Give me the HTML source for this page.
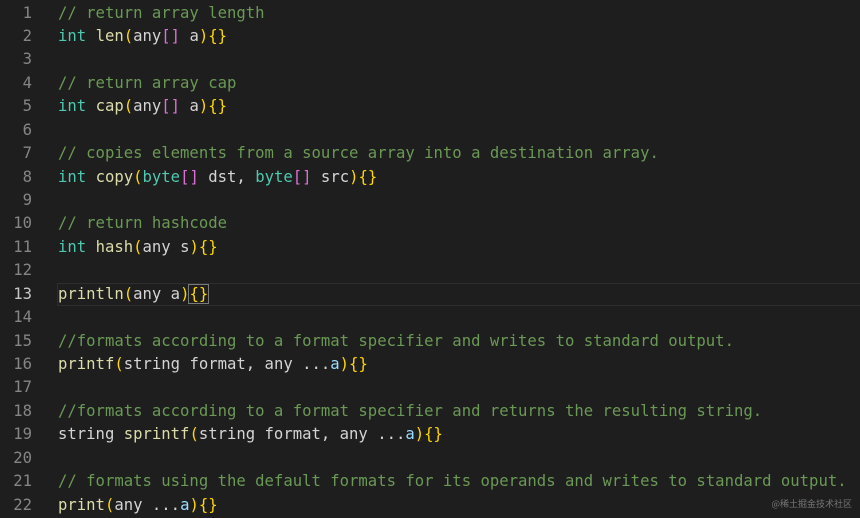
<!DOCTYPE html>
<html><head><style>
body{margin:0;background:#1e1e1e;width:860px;height:518px;overflow:hidden;font-family:"DejaVu Sans Mono","Liberation Mono",monospace;font-size:15.6px;}
.l{position:absolute;left:0;height:23.43px;line-height:23.43px;white-space:pre;width:860px;}
.n{position:absolute;left:0;width:32px;text-align:right;color:#858585;}
.c{position:absolute;left:58px;color:#d4d4d4;}
.cur .n{color:#c6c6c6}
.cur .b{position:absolute;left:57px;right:0;top:0;bottom:0;border:1px solid #2e2e2e;border-right:none}
.cm{color:#6a9955}.k{color:#4ec9b0}.f{color:#dcdcaa}.y{color:#ffd700}.p{color:#da70d6}.v{color:#9cdcfe}
.br{outline:1px solid #7a7a7a}
.wm{position:absolute;right:8px;bottom:8px;font-family:"Noto Sans CJK SC",sans-serif;font-size:9px;color:#777}
</style></head><body>
<div class="l" style="top:1.5px"><span class="n">1</span><span class="c"><span class="cm">// return array length</span></span></div>
<div class="l" style="top:24.9px"><span class="n">2</span><span class="c"><span class="k">int</span> <span class="f">len</span><span class="y">(</span>any<span class="p">[]</span> a<span class="y">){}</span></span></div>
<div class="l" style="top:48.4px"><span class="n">3</span></div>
<div class="l" style="top:71.8px"><span class="n">4</span><span class="c"><span class="cm">// return array cap</span></span></div>
<div class="l" style="top:95.2px"><span class="n">5</span><span class="c"><span class="k">int</span> <span class="f">cap</span><span class="y">(</span>any<span class="p">[]</span> a<span class="y">){}</span></span></div>
<div class="l" style="top:118.7px"><span class="n">6</span></div>
<div class="l" style="top:142.1px"><span class="n">7</span><span class="c"><span class="cm">// copies elements from a source array into a destination array.</span></span></div>
<div class="l" style="top:165.5px"><span class="n">8</span><span class="c"><span class="k">int</span> <span class="f">copy</span><span class="y">(</span><span class="k">byte</span><span class="p">[]</span> dst, <span class="k">byte</span><span class="p">[]</span> src<span class="y">){}</span></span></div>
<div class="l" style="top:189px"><span class="n">9</span></div>
<div class="l" style="top:212.4px"><span class="n">10</span><span class="c"><span class="cm">// return hashcode</span></span></div>
<div class="l" style="top:235.8px"><span class="n">11</span><span class="c"><span class="k">int</span> <span class="f">hash</span><span class="y">(</span>any s<span class="y">){}</span></span></div>
<div class="l" style="top:259.2px"><span class="n">12</span></div>
<div class="l cur" style="top:282.7px"><span class="b"></span><span class="n">13</span><span class="c"><span class="f">println</span><span class="y">(</span>any a<span class="y">)</span><span class="y br">{}</span></span></div>
<div class="l" style="top:306.1px"><span class="n">14</span></div>
<div class="l" style="top:329.5px"><span class="n">15</span><span class="c"><span class="cm">//formats according to a format specifier and writes to standard output.</span></span></div>
<div class="l" style="top:353px"><span class="n">16</span><span class="c"><span class="f">printf</span><span class="y">(</span>string format, any ...<span class="v">a</span><span class="y">){}</span></span></div>
<div class="l" style="top:376.4px"><span class="n">17</span></div>
<div class="l" style="top:399.8px"><span class="n">18</span><span class="c"><span class="cm">//formats according to a format specifier and returns the resulting string.</span></span></div>
<div class="l" style="top:423.3px"><span class="n">19</span><span class="c">string <span class="f">sprintf</span><span class="y">(</span>string format, any ...<span class="v">a</span><span class="y">){}</span></span></div>
<div class="l" style="top:446.7px"><span class="n">20</span></div>
<div class="l" style="top:470.1px"><span class="n">21</span><span class="c"><span class="cm">// formats using the default formats for its operands and writes to standard output.</span></span></div>
<div class="l" style="top:493.6px"><span class="n">22</span><span class="c"><span class="f">print</span><span class="y">(</span>any ...<span class="v">a</span><span class="y">){}</span></span></div>
<div class="wm">@稀土掘金技术社区</div>
</body></html>
